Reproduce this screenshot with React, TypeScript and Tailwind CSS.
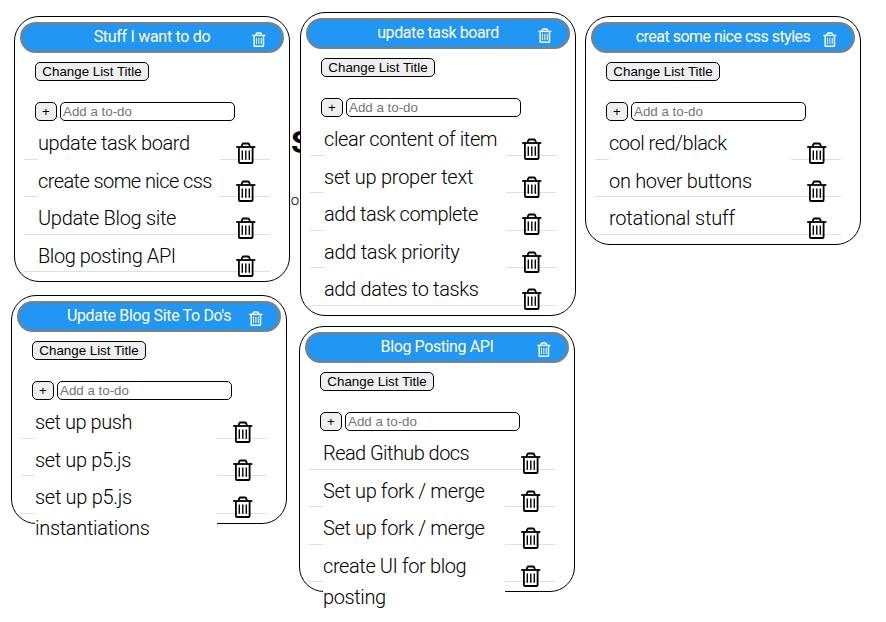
interface Item {
  text: string;
  tracking: string;
  /** The label's own background covers the divider under it. */
  cover?: boolean;
}

interface Board {
  title: string;
  tracking: string;
  height: string;
  place: string;
  items: Item[];
}

const columns: { className: string; boards: Board[] }[] = [
  {
    className: "w-[287px] pl-[11px] pt-4",
    boards: [
      {
        title: "Stuff I want to do",
        tracking: "tracking-[-0.3px]",
        height: "h-[266px]",
        place: "ml-[3px]",
        items: [
          { text: "update task board", tracking: "tracking-[-0.38px]", cover: true },
          { text: "create some nice css", tracking: "tracking-[-0.58px]", cover: true },
          { text: "Update Blog site", tracking: "tracking-[-0.31px]" },
          { text: "Blog posting API", tracking: "tracking-[-0.42px]" },
        ],
      },
      {
        title: "Update Blog Site To Do's",
        tracking: "tracking-[-0.34px]",
        height: "h-[229px]",
        place: "mt-[13px]",
        items: [
          { text: "set up push", tracking: "tracking-[-0.45px]", cover: true },
          { text: "set up p5.js", tracking: "tracking-[-0.36px]", cover: true },
          { text: "set up p5.js instantiations", tracking: "tracking-[-0.3px]", cover: true },
        ],
      },
    ],
  },
  {
    className: "w-[276px] ml-3 pt-3",
    boards: [
      {
        title: "update task board",
        tracking: "tracking-[-0.41px]",
        height: "h-[304px]",
        place: "ml-px",
        items: [
          { text: "clear content of item", tracking: "tracking-[-0.36px]", cover: true },
          { text: "set up proper text", tracking: "tracking-[-0.25px]", cover: true },
          { text: "add task complete", tracking: "tracking-[-0.47px]", cover: true },
          { text: "add task priority", tracking: "tracking-[-0.29px]", cover: true },
          { text: "add dates to tasks", tracking: "tracking-[-0.36px]" },
        ],
      },
      {
        title: "Blog Posting API",
        tracking: "tracking-[-0.39px]",
        height: "h-[266px]",
        place: "mt-2.5",
        items: [
          { text: "Read Github docs", tracking: "tracking-[-0.56px]" },
          { text: "Set up fork / merge", tracking: "tracking-[-0.37px]", cover: true },
          { text: "Set up fork / merge", tracking: "tracking-[-0.37px]", cover: true },
          { text: "create UI for blog posting", tracking: "tracking-[-0.39px]", cover: true },
        ],
      },
    ],
  },
  {
    className: "w-[276px] ml-2.5 pt-4",
    boards: [
      {
        title: "creat some nice css styles",
        tracking: "tracking-[-0.52px]",
        height: "h-[229px]",
        place: "",
        items: [
          { text: "cool red/black", tracking: "tracking-[-0.5px]", cover: true },
          { text: "on hover buttons", tracking: "tracking-[-0.31px]" },
          { text: "rotational stuff", tracking: "tracking-[-0.19px]" },
        ],
      },
    ],
  },
];

function Trash({ className }: { className: string }) {
  return (
    <svg viewBox="0 0 20 22" fill="none" stroke="currentColor" className={className}>
      <path d="M.2 5H19.3" />
      <path d="M5.5 4.5 6.3 2.4Q6.7 1.5 7.6 1.5H11.9Q12.8 1.5 13.2 2.4L14 4.5" />
      <path d="M2.9 5V20Q2.9 21 3.9 21H15.6Q16.6 21 16.6 20V5" />
      <path d="M6.3 8.5V17.7M9.8 8.5V17.7M13.3 8.5V17.7" strokeWidth="1.4" />
    </svg>
  );
}

const control =
  "h-[19px] rounded-[5px] border border-black font-['Liberation_Sans',Arial,sans-serif] text-[13.333px] leading-[17px]";

function Card({ board }: { board: Board }) {
  return (
    <section
      className={`w-[276px] shrink-0 rounded-[25px] border border-black bg-white px-[5px] pt-[5px] ${board.height} ${board.place}`}
    >
      <header className="grid h-[31px] grid-cols-[1fr_auto_1fr] rounded-full border-2 border-[#808080] bg-[#2196f3] text-white">
        <h2 className={`col-start-2 whitespace-nowrap text-base leading-[25px] ${board.tracking}`}>{board.title}</h2>
        <Trash className="mr-4 mt-2 h-[15px] w-3.5 justify-self-end stroke-[2.1]" />
      </header>
      <div className="flex flex-col items-start pl-[15px] pt-[9px]">
        <button className={`${control} w-[114px] whitespace-nowrap bg-[#efefef]`}>Change List Title</button>
        <div className="mt-[21px] flex gap-[3px]">
          <button className={`${control} w-[22px] bg-[#efefef]`}>+</button>
          <input
            placeholder="Add a to-do"
            className={`${control} w-[175px] bg-white px-0.5 placeholder:text-[#757575]`}
          />
        </div>
      </div>
      <ul className="ml-1 mt-px w-[246px]">
        {board.items.map((item, i) => (
          <li key={i} className="flex h-[37.5px] items-start border-b border-[#e0e0e0] pl-3.5 pt-1.5">
            <span
              className={`w-[182px] shrink-0 text-[20px] font-light leading-[31px] ${item.tracking} ${
                item.cover ? "min-h-[34px] bg-white" : ""
              }`}
            >
              {item.text}
            </span>
            <Trash className="ml-4 mt-3.5 h-[22px] w-5 shrink-0 stroke-[1.8]" />
          </li>
        ))}
      </ul>
    </section>
  );
}

export default function App() {
  return (
    <main className="relative h-[622px] w-[886px] overflow-hidden bg-white font-[Roboto,sans-serif] text-black">
      <h1 className="absolute left-[291px] top-[122px] text-[32px] font-bold leading-[40px]">S</h1>
      <p className="absolute left-[286px] top-[190px] text-[15px] font-light leading-5">to</p>
      <div className="relative flex items-start">
        {columns.map((column, i) => (
          <div key={i} className={`flex shrink-0 flex-col ${column.className}`}>
            {column.boards.map((board) => (
              <Card key={board.title} board={board} />
            ))}
          </div>
        ))}
      </div>
    </main>
  );
}
